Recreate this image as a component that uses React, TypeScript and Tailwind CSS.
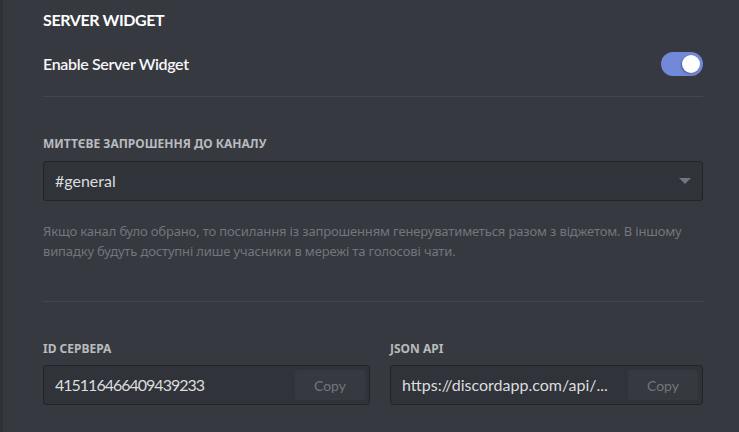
import React from 'react';

const latin = { fontFamily: 'Lato, "Noto Sans", sans-serif' };
const cyr = { fontFamily: '"Noto Sans", "Open Sans", sans-serif' };

function CopyField({ value, tight }: { value: string; tight?: boolean }) {
  return (
    <div className="flex h-[40px] items-center rounded-[3px] border border-[#222427] bg-[#303339] pl-[11px] pr-[4px]">
      <span
        className={`flex-1 truncate text-[16px] text-[#dcddde] ${tight ? 'tracking-[-1px]' : ''}`}
        style={latin}
      >
        {value}
      </span>
      <button
        type="button"
        className="h-[30px] w-[70px] shrink-0 rounded-[3px] bg-[#36393f] text-[14px] text-[#72767d]"
        style={latin}
      >
        Copy
      </button>
    </div>
  );
}

export default function App() {
  return (
    <div className="flex h-[432px] w-[739px] overflow-hidden bg-[#36393f]" style={cyr}>
      <div className="w-[3px] shrink-0 bg-[#2f3136]" />
      <div className="flex-1 pl-[40px] pr-[36px]">
        <h2
          className="mt-[10px] text-[16px] font-bold uppercase leading-[20px] tracking-[-0.4px] text-white"
          style={latin}
        >
          Server Widget
        </h2>

        <div className="mt-[22px] flex h-[24px] items-center justify-between">
          <span className="text-[16px] font-semibold tracking-[-0.35px] text-[#f6f6f7]" style={latin}>
            Enable Server Widget
          </span>
          <div className="flex h-[24px] w-[42px] items-center justify-end rounded-full bg-[#7289da] px-[3px]">
            <div className="h-[18px] w-[18px] rounded-full bg-white shadow-[-1px_1px_2px_rgba(0,0,0,0.3)]" />
          </div>
        </div>

        <div className="mt-[20px] h-px bg-[#44474d]" />

        <h5 className="mt-[39px] text-[12px] font-bold uppercase leading-[16px] text-[#b9bbbe]">
          Миттєве запрошення до каналу
        </h5>

        <div className="mt-[9px] flex h-[40px] items-center justify-between rounded-[3px] border border-[#222427] bg-[#303339] pl-[11px] pr-[11px]">
          <span className="text-[16px] text-[#dcddde]" style={latin}>
            #general
          </span>
          <svg width="12" height="6" viewBox="0 0 12 6" aria-hidden>
            <path d="M0 0h12L6 6z" fill="#72767d" />
          </svg>
        </div>

        <p className="mt-[20px] text-[13px] leading-[20px] tracking-[-0.15px] text-[#72767d]">
          Якщо канал було обрано, то посилання із запрошенням генеруватиметься разом з віджетом. В іншому
          випадку будуть доступні лише учасники в мережі та голосові чати.
        </p>

        <div className="mt-[40px] h-px bg-[#44474d]" />

        <div className="mt-[39px] grid grid-cols-[327px_1fr] gap-[20px]">
          <div>
            <h5 className="text-[12px] font-bold uppercase leading-[16px] text-[#b9bbbe]">ID сервера</h5>
            <div className="mt-[8px]">
              <CopyField value="415116466409439233" tight />
            </div>
          </div>
          <div>
            <h5 className="text-[12px] font-bold uppercase leading-[16px] text-[#b9bbbe]">JSON API</h5>
            <div className="mt-[8px]">
              <CopyField value="https://discordapp.com/api/..." />
            </div>
          </div>
        </div>
      </div>
    </div>
  );
}
